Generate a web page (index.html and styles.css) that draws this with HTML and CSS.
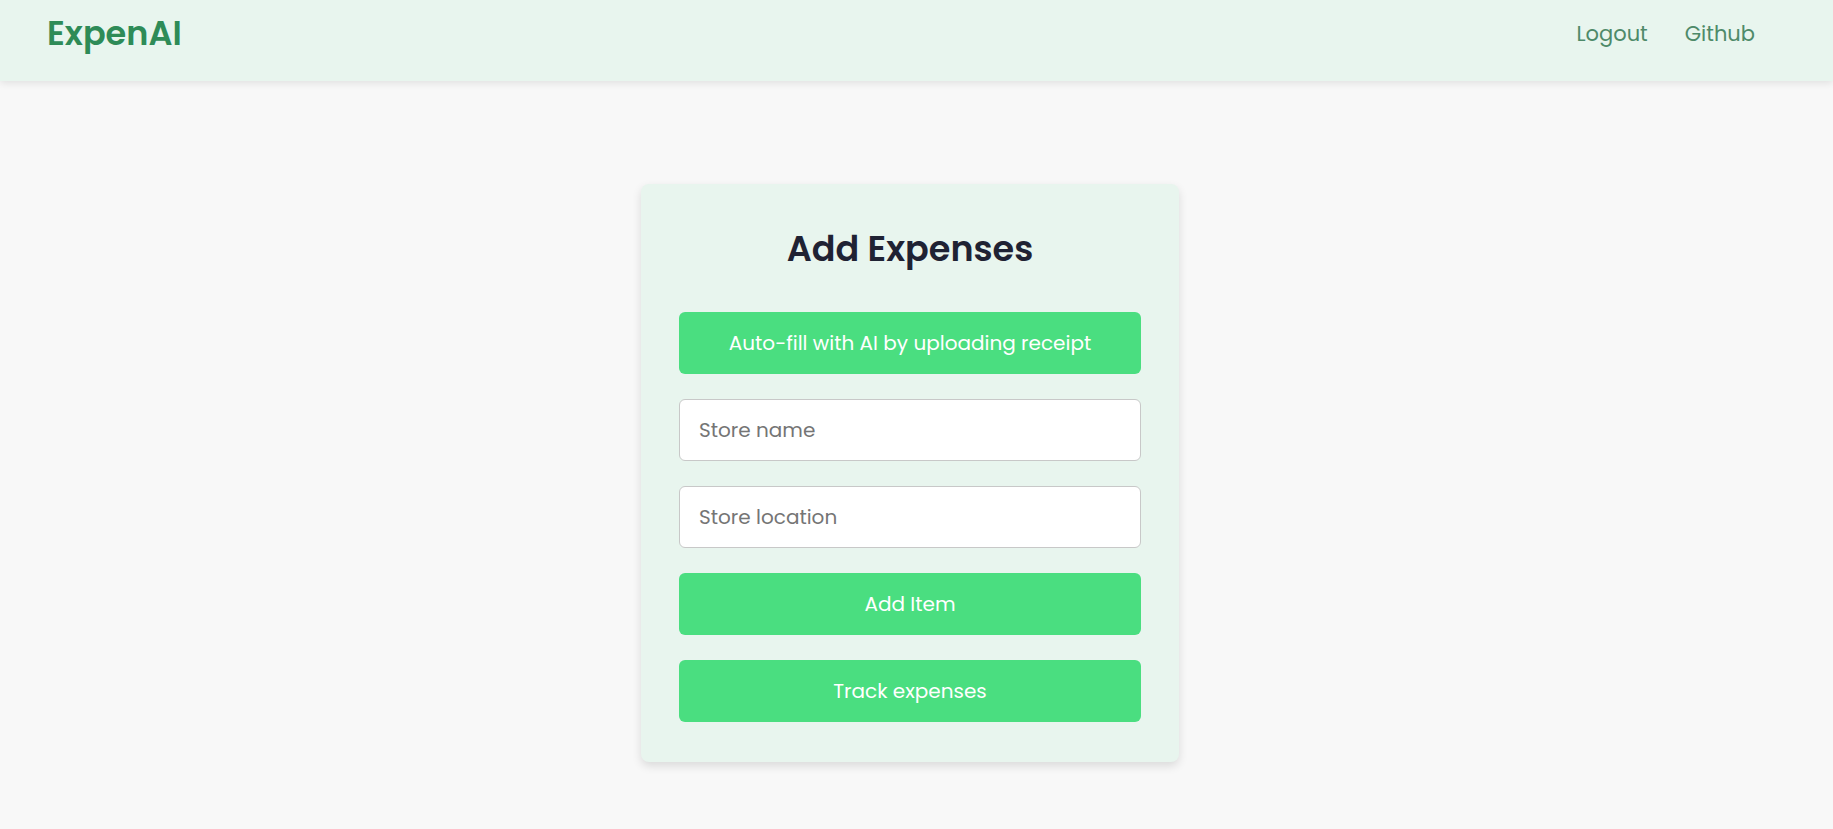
FILE: index.html
```html
<!DOCTYPE html>
<html lang="en">
<head>
<meta charset="utf-8">
<title>ExpenAI</title>
<link rel="stylesheet" href="styles.css">
</head>
<body>
<nav class="navbar">
  <a class="logo" href="#">ExpenAI</a>
  <div class="nav-links">
    <a class="nav-link" href="#">Logout</a>
    <a class="nav-link" href="#">Github</a>
  </div>
</nav>
<main class="main">
  <section class="card">
    <h1 class="title">Add Expenses</h1>
    <form class="form">
      <button type="button" class="btn">Auto-fill with AI by uploading receipt</button>
      <input class="field" type="text" placeholder="Store name">
      <input class="field" type="text" placeholder="Store location">
      <button type="button" class="btn">Add Item</button>
      <button type="button" class="btn">Track expenses</button>
    </form>
  </section>
</main>
</body>
</html>
```
FILE: styles.css
```css
* { box-sizing: border-box; }
body {
  margin: 0;
  background: #f8f8f8;
  font-family: "Poppins", "Inter", "Open Sans", sans-serif;
  min-height: 829px;
}
.navbar {
  height: 81px;
  background: #e8f5ee;
  box-shadow: 0 2px 8px rgba(0,0,0,0.10);
  display: flex;
  align-items: center;
  justify-content: space-between;
  padding: 0 78px 14px 47px;
}
.logo {
  color: #2e8b57;
  font-size: 33.5px;
  font-weight: 600;
  text-decoration: none;
}
.nav-links { display: flex; gap: 37px; }
.nav-link {
  color: #4e8a69;
  font-size: 21px;
  text-decoration: none;
}
.main {
  display: flex;
  justify-content: center;
  padding: 103px 13px 0 0;
}
.card {
  width: 538px;
  background: #e8f5ee;
  border-radius: 8px;
  box-shadow: 0 4px 10px rgba(0,0,0,0.12);
  padding: 41px 38px 40px 38px;
}
.title {
  margin: 0 0 39px;
  text-align: center;
  font-size: 35px;
  font-weight: 600;
  color: #1f2233;
  line-height: 48px;
}
.form { display: flex; flex-direction: column; gap: 25px; }
.btn {
  height: 62px;
  border: none;
  border-radius: 6px;
  background: #4ade80;
  color: #fff;
  font-family: inherit;
  font-size: 20px;
}
.field {
  height: 62px;
  border: 1px solid #c8c8c8;
  border-radius: 6px;
  background: #fff;
  padding: 0 19px;
  font-family: inherit;
  font-size: 20px;
}
.field::placeholder { color: #757575; }
```
